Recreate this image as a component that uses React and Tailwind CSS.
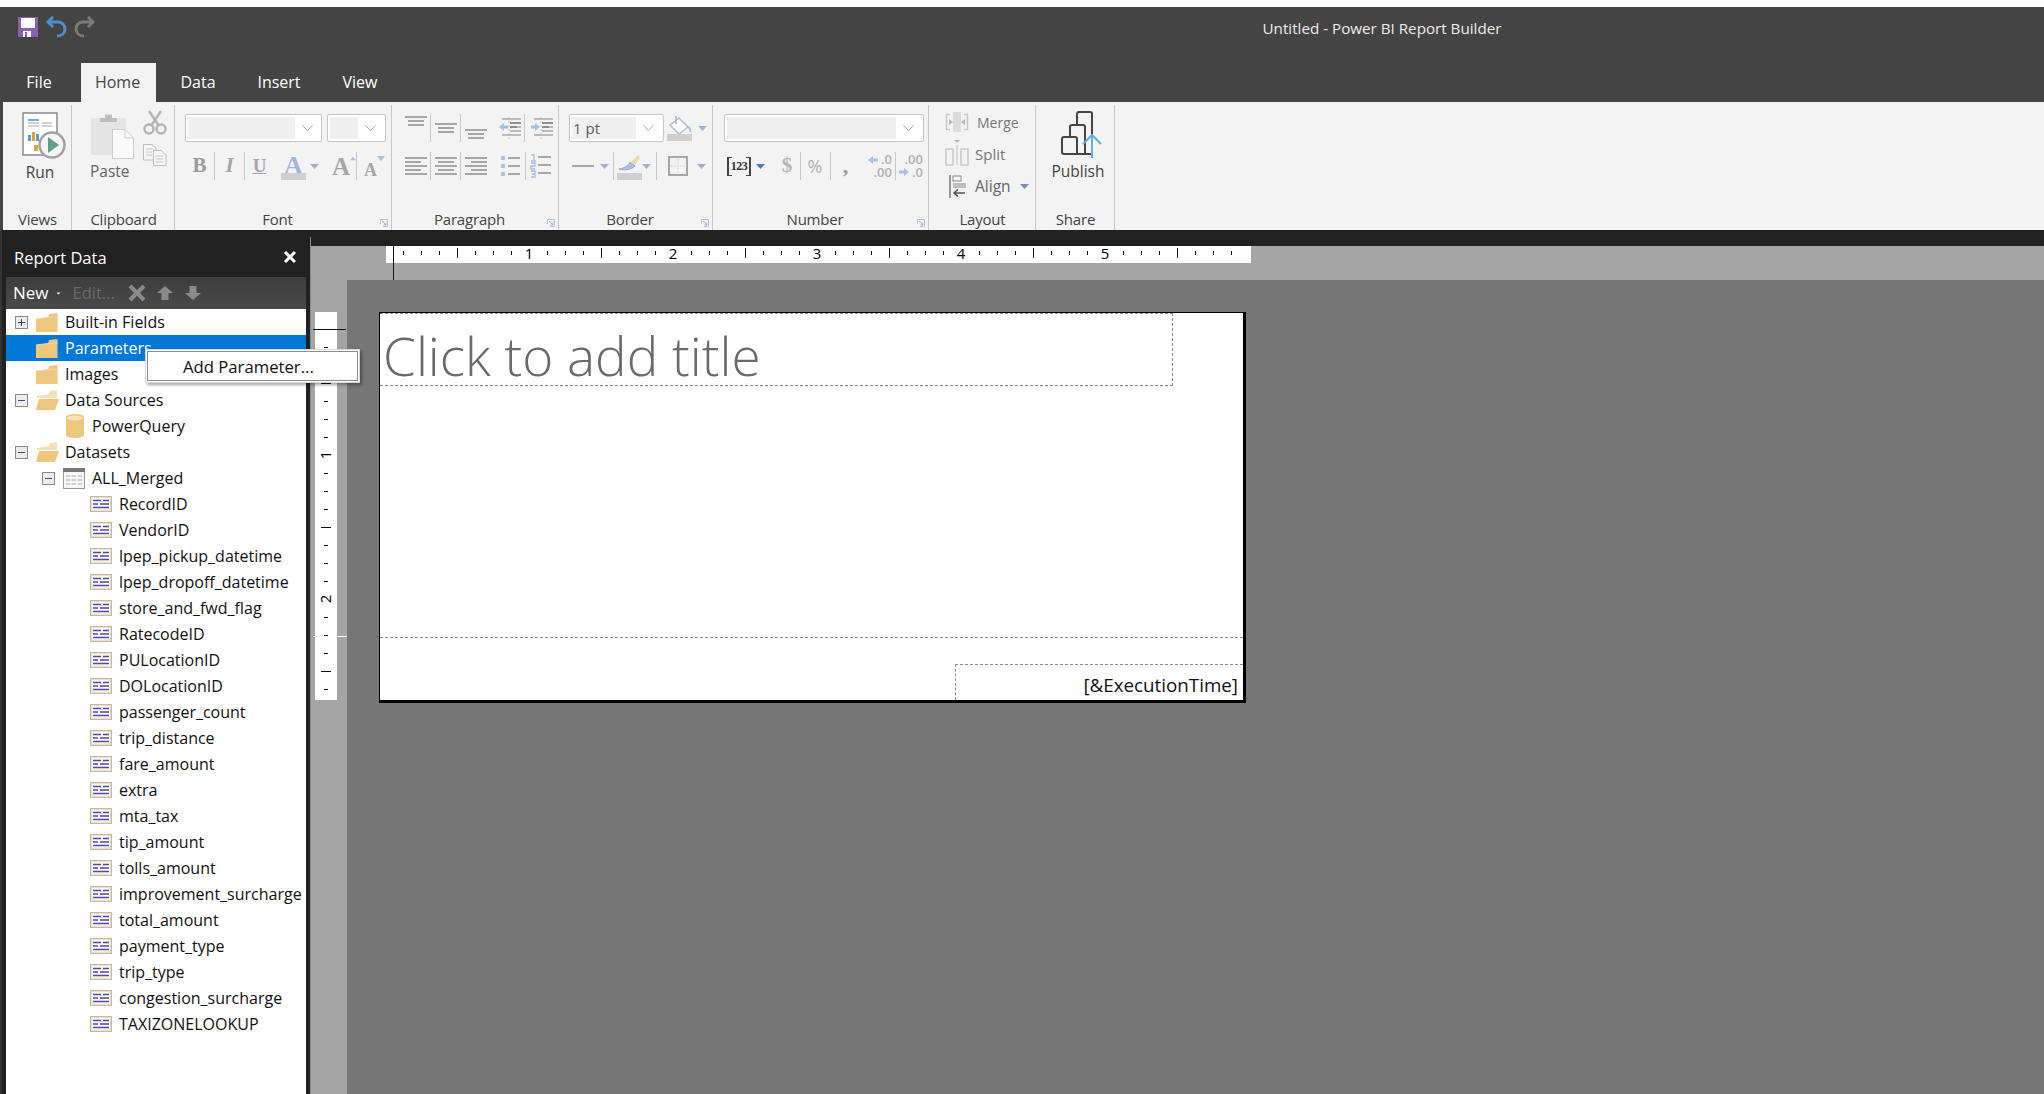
import React from "react";

const Sep = ({ c = "" }) => <div className={`w-px h-[28px] bg-[#c8c8c8] shrink-0 ${c}`} />;
const Caret = ({ c = "", color = "#9fb3d6" }) => (
  <svg width="9" height="5" viewBox="0 0 9 5" className={`block shrink-0 ${c}`}><path d="M0 0h9L4.5 5z" fill={color} /></svg>
);
const Chevron = () => (
  <svg width="11" height="6" viewBox="0 0 11 6" className="block shrink-0"><path d="M.5.5 5.5 5.5 10.5.5" fill="none" stroke="#a8a8a8" /></svg>
);
const Combo = ({ w, fill, value }) => (
  <div className={`${w} h-[28px] border border-[#c6c6c6] rounded-[2px] bg-white p-[2px] flex items-center shrink-0`}>
    <div className={`${fill} h-full bg-[#f0f0f0] text-[15px] leading-[23px] text-[#5e5e5e] pl-[1px]`}>{value}</div>
    <div className="flex-1 flex justify-center"><Chevron /></div>
  </div>
);
const Launcher = () => (
  <svg width="8" height="8" viewBox="0 0 8 8" className="absolute right-[3px] bottom-[3px]">
    <path d="M.5 5V.5H7.5V7.5H3" fill="none" stroke="#b7c3d6" /><path d="M2 2 6 6M6 3.5V6H3.5" fill="none" stroke="#9fb3d6" />
  </svg>
);
const Group = ({ w, label, launcher, children }) => (
  <div className={`relative ${w} h-full flex flex-col border-r border-[#c8c8c8] shrink-0`}>
    <div className="flex-1 min-h-0 relative">{children}</div>
    <div className={`h-[21px] leading-[21px] text-center text-[15px] text-[#444] tracking-[-0.2px] ${launcher ? "pr-[11px]" : "pl-[1px]"}`}>{label}</div>
    {launcher && <Launcher />}
  </div>
);
const Lines = ({ rows, w = 22, h = 24 }) => (
  <svg width={w} height={h} viewBox={`0 0 ${w} ${h}`} className="block shrink-0">
    {rows.map(([x1, x2, y], i) => <path key={i} d={`M${x1} ${y}H${x2}`} stroke="#a6a6a6" strokeWidth="2" />)}
  </svg>
);

const RunIcon = () => (
  <svg width="46" height="50" viewBox="0 0 46 50" className="block">
    <rect x="1" y="1" width="34" height="42" fill="#fff" stroke="#8a8a8a" strokeWidth="1.5" />
    <path d="M6 8H17" stroke="#4a8fd0" strokeWidth="1.5" /><path d="M6 11H17M6 14H17M20 11H30M20 14H30" stroke="#a9a9a9" strokeWidth="1.2" />
    <rect x="6" y="23" width="3" height="6" fill="#5a9ad6" /><rect x="10" y="20" width="3" height="9" fill="#e0a030" /><rect x="14" y="22" width="3" height="7" fill="#5a9ad6" />
    <rect x="12" y="33" width="4" height="6" fill="#d9a441" />
    <circle cx="30" cy="33" r="12.5" fill="#f6f6f6" stroke="#a3a3a3" strokeWidth="2.5" />
    <path d="M26 25 37 33 26 41z" fill="#5f9e8a" />
  </svg>
);
const PasteIcon = () => (
  <svg width="44" height="46" viewBox="0 0 44 46" className="block">
    <rect x="0" y="5" width="35" height="37" rx="2" fill="#e4e4e4" />
    <path d="M9 9V5H14V1.5H21V5H26V9z" fill="#bdbdbd" />
    <path d="M21.500 16.500H34L42.500 25V45.500H21.500z" fill="#fafafa" stroke="#cdcdcd" />
    <path d="M34 16.500V25H42.500" fill="none" stroke="#cdcdcd" />
  </svg>
);
const ScissorsIcon = () => (
  <svg width="24" height="25" viewBox="0 0 24 25" className="block">
    <path d="M6 1 16 16M18 1 8 16" stroke="#b5b5b5" strokeWidth="2.5" fill="none" />
    <circle cx="6" cy="19" r="4.500" fill="none" stroke="#b5b5b5" strokeWidth="2.5" /><circle cx="18" cy="19" r="4.500" fill="none" stroke="#b5b5b5" strokeWidth="2.500" />
  </svg>
);
const CopyIcon = () => (
  <svg width="24" height="22" viewBox="0 0 24 22" className="block">
    <path d="M.5.5H9L13 4V16H.500z" fill="#f6f6f6" stroke="#bdbdbd" /><path d="M10.500 6.500H18L23 11V21.500H10.500z" fill="#f6f6f6" stroke="#bdbdbd" />
    <path d="M3 5H9M3 8H9M3 11H9M13 12H20M13 15H20M13 18H20" stroke="#c6c6c6" />
  </svg>
);
const SmallA = ({ size, c = "", color = "#a6a6a6" }) => (
  <span className={`font-['Liberation_Serif',serif] font-bold leading-none ${c}`} style={{ fontSize: size, color }}>A</span>
);
const Up = ({ c = "" }) => <svg width="8" height="5" viewBox="0 0 8 5" className={`block ${c}`}><path d="M0 5 4 0 8 5z" fill="#aebfdc" /></svg>;
const Dn = ({ c = "" }) => <svg width="8" height="5" viewBox="0 0 8 5" className={`block ${c}`}><path d="M0 0H8L4 5z" fill="#aebfdc" /></svg>;

const Indent = ({ dir }) => (
  <svg width="24" height="24" viewBox="0 0 24 24" className="block shrink-0">
    <path d="M11 1V23" stroke="#c9c9c9" strokeWidth="1" strokeDasharray="2 2" />
    <path d="M4 3H23M12 7H23M12 11H23M12 15H23M4 19H23" stroke="#bbb" strokeWidth="2" />
    <path d="M12 7H23M12 11H19" stroke="#8f8f8f" strokeWidth="2" />
    {dir === "l" ? <path d="M1 11 6 7V9.500H10V12.500H6V15z" fill="#a9bfe4" /> : <path d="M10 11 5 7V9.500H1V12.500H5V15z" fill="#a9bfe4" />}
  </svg>
);
const Bullets = () => (
  <svg width="22" height="24" viewBox="0 0 22 24" className="block shrink-0">
    <circle cx="3" cy="4" r="2.200" fill="#aebfdc" /><circle cx="3" cy="12" r="2.200" fill="#aebfdc" /><circle cx="3" cy="20" r="2.200" fill="#aebfdc" />
    <path d="M8 4H20M8 12H20M8 20H20" stroke="#a6a6a6" strokeWidth="2" />
  </svg>
);
const Numbered = () => (
  <svg width="22" height="24" viewBox="0 0 22 24" className="block shrink-0">
    <path d="M8 3H21M8 11H21M8 19H21" stroke="#a6a6a6" strokeWidth="2" />
    <path d="M1 1H4V7M1 7H6M1 9H5V12H1V15H5M1 17H5V23H1M2 20H5" stroke="#a9bfe4" strokeWidth="1.300" fill="none" />
  </svg>
);
const Bucket = () => (
  <svg width="26" height="26" viewBox="0 0 26 26" className="block shrink-0">
    <path d="M3 10 12 3 21 12 12 19z" fill="#fdfdfd" stroke="#b4bfd2" strokeWidth="1.500" />
    <path d="M9 1V9" stroke="#aab4c6" strokeWidth="1.500" /><path d="M20 11C23 13 24 15 23 17" stroke="#aebfdc" strokeWidth="2" fill="none" />
    <rect x="0" y="19" width="25" height="7" fill="#cfcfcf" />
  </svg>
);
const Brush = () => (
  <svg width="26" height="27" viewBox="0 0 26 27" className="block shrink-0">
    <path d="M2 16C8 15 11 13 13 9L18 13C15 16 9 18 2 16z" fill="#a9bfe4" stroke="#8fa8d8" />
    <path d="M14 9 21 2 23 4 18 12z" fill="#e6d9a8" />
    <rect x="0" y="20" width="25" height="7" fill="#cfcfcf" />
  </svg>
);
const BorderIcon = () => (
  <svg width="20" height="20" viewBox="0 0 20 20" className="block shrink-0">
    <rect x="1" y="1" width="18" height="18" fill="none" stroke="#a6a6a6" strokeWidth="2" />
    <path d="M10 3V17M3 10H17" stroke="#cfcfcf" strokeDasharray="1.500 1.500" />
  </svg>
);
const MergeIcon = () => (
  <svg width="24" height="20" viewBox="0 0 24 20" className="block">
    <path d="M5 2.500H1.500V17.500H5M19 2.500H22.500V17.500H19" fill="none" stroke="#c8c8c8" strokeWidth="1.500" />
    <rect x="8" y="0" width="8" height="20" fill="#dcdcdc" />
    <path d="M4 7 8 10 4 13zM20 7 16 10 20 13z" fill="#b5b5b5" />
  </svg>
);
const SplitIcon = () => (
  <svg width="24" height="26" viewBox="0 0 24 26" className="block">
    <path d="M9 0H15L12 3z" fill="#b5b5b5" />
    <rect x="1" y="9" width="7" height="16" fill="none" stroke="#c8c8c8" strokeWidth="1.500" />
    <rect x="16" y="9" width="7" height="16" fill="none" stroke="#c8c8c8" strokeWidth="1.500" />
    <path d="M12 5V25" stroke="#d8d8d8" strokeWidth="2" />
  </svg>
);
const AlignIcon = () => (
  <svg width="18" height="23" viewBox="0 0 18 23" className="block">
    <path d="M1 0V23" stroke="#777" strokeWidth="1.500" />
    <rect x="4" y="1" width="8" height="5" fill="#f5f5f5" stroke="#8a8a8a" /><rect x="4" y="8" width="13" height="5" fill="#bdbdbd" />
    <path d="M16 18H5M9 14.500 5 18 9 21.500" fill="none" stroke="#555" strokeWidth="1.500" />
  </svg>
);
const PublishIcon = () => (
  <svg width="44" height="48" viewBox="0 0 44 48" className="block">
    <path d="M10 26V16C10 15 11 14 12 14H23C24 14 25 15 25 16V43M17 14V3C17 2 18 1 19 1H30C31 1 32 2 32 3V30" fill="none" stroke="#444" strokeWidth="2" />
    <path d="M4 26H15C16 26 17 27 17 28V43H4C3 43 2 42 2 41V28C2 27 3 26 4 26zM17 43H32" fill="none" stroke="#444" strokeWidth="2" />
    <path d="M32 47V24M23 33 32 24 41 33" fill="none" stroke="#5cb0e4" strokeWidth="2" />
  </svg>
);
const DecBtn = ({ dir, text }) => (
  <div className="relative w-[24px] h-[26px] shrink-0 text-[13px] leading-[13px] text-[#b0b0b0] font-semibold text-right whitespace-pre-line">
    {text}
    <svg width="10" height="10" viewBox="0 0 10 10" className={`absolute left-0 ${dir === "l" ? "top-[2px]" : "top-[14px]"}`}>
      {dir === "l" ? <path d="M0 5 5 1V3.500H10V6.500H5V9z" fill="#a9bfe4" /> : <path d="M10 5 5 1V3.500H0V6.500H5V9z" fill="#a9bfe4" />}
    </svg>
  </div>
);

const Ribbon = () => (
  <div className="h-[128px] ml-[3px] bg-[#f3f3f3] pt-[3px] flex">
    <Group w="w-[69px]" label="Views">
      <div className="ml-[19px] mt-[7px]"><RunIcon /></div>
      <div className="w-[76px] text-center text-[15.5px] leading-[20px] text-[#444] mt-[0px] -ml-[1px]">Run</div>
    </Group>
    <Group w="w-[103px]" label="Clipboard">
      <div className="flex">
        <div className="ml-[19px] mt-[8px]">
          <PasteIcon />
          <div className="w-[38px] text-center text-[15.5px] leading-[20px] text-[#666] mt-[2px] -ml-[1px]">Paste</div>
        </div>
        <div className="ml-[8px] mt-[5px]">
          <ScissorsIcon />
          <div className="mt-[9px]"><CopyIcon /></div>
        </div>
      </div>
    </Group>
    <Group w="w-[217px]" label="Font" launcher>
      <div className="flex ml-[10px] mt-[9px] gap-[5px]">
        <Combo w="w-[137px]" fill="w-[107px]" />
        <Combo w="w-[59px]" fill="w-[28px]" />
      </div>
      <div className="flex items-center ml-[10px] mt-[10px] h-[28px]">
        <div className="w-[29px] text-center font-['Liberation_Serif',serif] font-bold text-[21px] text-[#9b9b9b]">B</div>
        <Sep />
        <div className="w-[29px] text-center font-['Liberation_Serif',serif] italic font-bold text-[21px] text-[#a6a6a6]">I</div>
        <Sep />
        <div className="w-[29px] text-center font-['Liberation_Serif',serif] font-bold underline text-[19px] text-[#a6a6a6]">U</div>
        <div className="ml-[7px] w-[25px] flex flex-col items-center">
          <SmallA size={26} color="#a3b5d8" c="h-[20px]" />
          <div className="h-[7px] w-[25px] bg-[#cfcfcf]" />
        </div>
        <Caret c="ml-[4px]" />
        <div className="ml-[13px] flex items-start w-[24px]"><SmallA size={25} /><Up c="mt-[2px]" /></div>
        <Sep />
        <div className="ml-[7px] flex items-start"><SmallA size={18} c="mt-[7px]" /><Dn c="mt-[2px]" /></div>
      </div>
    </Group>
    <Group w="w-[167px]" label="Paragraph" launcher>
      <div className="flex items-center ml-[13px] mt-[9px] h-[28px]">
        <Lines rows={[[0, 22, 1], [3, 19, 5], [3, 19, 9]]} /><Sep c="ml-[3px]" />
        <div className="ml-[4px]"><Lines rows={[[0, 22, 8], [3, 19, 12], [3, 19, 16]]} /></div><Sep c="ml-[3px]" />
        <div className="ml-[4px]"><Lines rows={[[0, 22, 14], [3, 19, 18], [3, 19, 22]]} /></div>
        <div className="ml-[11px]"><Indent dir="l" /></div><Sep c="ml-[2px]" />
        <div className="ml-[5px]"><Indent dir="r" /></div>
      </div>
      <div className="flex items-center ml-[13px] mt-[10px] h-[28px]">
        <Lines rows={[[0, 22, 4], [0, 16, 8], [0, 22, 12], [0, 16, 16], [0, 22, 20]]} /><Sep c="ml-[3px]" />
        <div className="ml-[4px]"><Lines rows={[[0, 22, 4], [3, 19, 8], [0, 22, 12], [3, 19, 16], [0, 22, 20]]} /></div><Sep c="ml-[3px]" />
        <div className="ml-[4px]"><Lines rows={[[0, 22, 4], [6, 22, 8], [0, 22, 12], [6, 22, 16], [0, 22, 20]]} /></div>
        <div className="ml-[13px]"><Bullets /></div><Sep c="ml-[3px]" />
        <div className="ml-[4px]"><Numbered /></div>
      </div>
    </Group>
    <Group w="w-[154px]" label="Border" launcher>
      <div className="flex items-center ml-[10px] mt-[9px] h-[28px]">
        <Combo w="w-[95px]" fill="w-[64px]" value="1 pt" />
        <div className="ml-[3px]"><Bucket /></div>
        <Caret c="ml-[5px]" />
      </div>
      <div className="flex items-center ml-[13px] mt-[10px] h-[28px]">
        <div className="w-[22px] h-[2px] bg-[#a6a6a6]" />
        <Caret c="ml-[6px]" /><Sep c="ml-[4px]" />
        <div className="ml-[3px]"><Brush /></div>
        <Caret c="ml-[-1px]" /><Sep c="ml-[5px]" />
        <div className="ml-[11px]"><BorderIcon /></div>
        <Caret c="ml-[9px]" />
      </div>
    </Group>
    <Group w="w-[216px]" label="Number" launcher>
      <div className="ml-[11px] mt-[9px]"><Combo w="w-[200px]" fill="w-[169px]" /></div>
      <div className="flex items-center ml-[14px] mt-[10px] h-[28px]">
        <div className="relative w-[24px] h-[19px] border-x-2 border-[#444] flex items-center justify-center font-['Liberation_Serif',serif] font-bold text-[12px] text-[#333] tracking-[-0.5px]">
          <span className="absolute left-0 top-0 w-[3px] h-full border-y border-[#444]" />
          <span className="absolute right-0 top-0 w-[3px] h-full border-y border-[#444]" />
          123
        </div>
        <Caret c="ml-[5px]" color="#4a78c0" />
        <div className="w-[20px] ml-[12px] text-center font-['Liberation_Serif',serif] font-bold text-[21px] text-[#b5b5b5]">$</div>
        <Sep c="ml-[3px]" />
        <div className="w-[28px] text-center text-[18px] text-[#b0b0b0]">%</div>
        <Sep c="ml-[1px]" />
        <div className="w-[29px] text-center font-['Liberation_Serif',serif] font-bold text-[22px] leading-[16px] text-[#9b9b9b]">,</div>
        <div className="ml-[8px]"><DecBtn dir="l" text={".0\n.00"} /></div>
        <Sep c="ml-[3px]" />
        <div className="ml-[3px]"><DecBtn dir="r" text={".00\n.0"} /></div>
      </div>
    </Group>
    <Group w="w-[107px]" label="Layout">
      <div className="flex items-center ml-[16px] mt-[7px] h-[20px]">
        <MergeIcon /><span className="ml-[8px] text-[14px] text-[#777]">Merge</span>
      </div>
      <div className="flex items-center ml-[16px] mt-[8px] h-[26px]">
        <SplitIcon /><span className="ml-[6px] text-[15px] text-[#777] mt-[2px]">Split</span>
      </div>
      <div className="flex items-center ml-[20px] mt-[9px] h-[23px]">
        <AlignIcon /><span className="ml-[8px] text-[15.5px] text-[#666]">Align</span>
        <Caret c="ml-[9px]" color="#6f8fc8" />
      </div>
    </Group>
    <Group w="w-[79px]" label="Share">
      <div className="ml-[24px] mt-[6px]"><PublishIcon /></div>
      <div className="text-center text-[15.5px] leading-[20px] text-[#444] mt-[2px] w-[84px]">Publish</div>
    </Group>
  </div>
);

const FolderClosed = () => (
  <svg width="22" height="19" viewBox="0 0 22 19" className="block shrink-0">
    <path d="M0 6 12 4.500 13 1 21.500 0V19H0z" fill="#eec77f" /><path d="M0 6 12 4.500 21.500 4" fill="none" stroke="#f3d69f" />
  </svg>
);
const FolderOpen = () => (
  <svg width="23" height="20" viewBox="0 0 23 20" className="block shrink-0">
    <path d="M1 6 13 4 14 1 21 0V8H1z" fill="#f6e0b4" /><path d="M3 9H23L19 20H0z" fill="#eec77f" />
  </svg>
);
const Cylinder = () => (
  <svg width="18" height="24" viewBox="0 0 18 24" className="block shrink-0">
    <path d="M0 3C0 -1 18 -1 18 3V21C18 25 0 25 0 21z" fill="#eec77f" /><ellipse cx="9" cy="4" rx="8" ry="2.500" fill="#f6e3bc" />
  </svg>
);
const TableIcon = () => (
  <svg width="22" height="21" viewBox="0 0 22 21" className="block shrink-0">
    <rect x=".5" y=".5" width="21" height="20" fill="#f7f7f7" stroke="#9a9a9a" /><rect x="0" y="0" width="22" height="4" fill="#777" />
    <path d="M3 8H19M3 12H19M3 16H19" stroke="#cfcfcf" strokeWidth="2" /><path d="M8 6V18M14 6V18" stroke="#fff" />
  </svg>
);
const FieldIcon = () => (
  <svg width="22" height="16" viewBox="0 0 22 16" className="block shrink-0">
    <rect x=".5" y=".5" width="21" height="15" fill="#e9e2cc" stroke="#c4b99c" /><rect x="2" y="2" width="18" height="11.500" fill="#fbfaf3" />
    <path d="M3 4.500H11M13 4.500H19M3 8H8M10 8H19M3 11.500H19" stroke="#4c4cac" strokeWidth="1.700" />
  </svg>
);
const Box = ({ plus }) => (
  <svg width="13" height="13" viewBox="0 0 13 13" className="block shrink-0">
    <rect x=".5" y=".5" width="12" height="12" fill="#ececec" stroke="#8a8a8a" />
    <path d={plus ? "M3 6.500H10M6.500 3V10" : "M3 6.500H10"} stroke="#3a4a8a" />
  </svg>
);

const fields = ["RecordID", "VendorID", "lpep_pickup_datetime", "lpep_dropoff_datetime", "store_and_fwd_flag", "RatecodeID", "PULocationID", "DOLocationID", "passenger_count", "trip_distance", "fare_amount", "extra", "mta_tax", "tip_amount", "tolls_amount", "improvement_surcharge", "total_amount", "payment_type", "trip_type", "congestion_surcharge", "TAXIZONELOOKUP"];

const Row = ({ sel, pl, gap, box, icon, text }) => (
  <div className={`h-[26px] flex items-center whitespace-nowrap text-[16px] ${sel ? "bg-[#0078d7] text-white" : "text-[#111]"} ${pl}`}>
    {box}
    {icon}
    <span className={`${gap} pb-[1px]`}>{text}</span>
  </div>
);

const Panel = () => (
  <div className="w-[310px] shrink-0 bg-[#212121] border-l-2 border-[#333] pl-[4px] pr-[4px] flex flex-col">
    <div className="h-[47px] flex items-center justify-between pl-[8px] pr-[9px] pt-[9px] text-white text-[16.5px]">
      <span>Report Data</span>
      <svg width="14" height="14" viewBox="0 0 14 14" className="block mb-[3px]"><path d="M2 2 12 12M12 2 2 12" stroke="#fff" strokeWidth="3" /></svg>
    </div>
    <div className="h-[32px] bg-gradient-to-b from-[#3d3d3d] to-[#4a4a4a] flex items-center pl-[7px]">
      <span className="text-white text-[17px]">New</span>
      <Caret c="ml-[5px] scale-50" color="#ddd" />
      <span className="ml-[10px] text-[#6a6a6a] text-[16.5px]">Edit...</span>
      <svg width="18" height="18" viewBox="0 0 18 18" className="block ml-[13px]"><path d="M2 2 16 16M16 2 2 16" stroke="#8a8a8a" strokeWidth="4" /></svg>
      <svg width="16" height="14" viewBox="0 0 16 14" className="block ml-[11px]"><path d="M8 0 16 7H11.500V14H4.500V7H0z" fill="#8a8a8a" /></svg>
      <svg width="16" height="14" viewBox="0 0 16 14" className="block ml-[12px]"><path d="M8 14 16 7H11.500V0H4.500V7H0z" fill="#8a8a8a" /></svg>
    </div>
    <div className="relative flex-1 bg-white">
      <Row pl="pl-[9px]" box={<Box plus />} icon={<div className="ml-[8px]"><FolderClosed /></div>} gap="ml-[7px]" text="Built-in Fields" />
      <Row sel pl="pl-[30px]" icon={<FolderClosed />} gap="ml-[7px]" text="Parameters" />
      <Row pl="pl-[30px]" icon={<FolderClosed />} gap="ml-[7px]" text="Images" />
      <Row pl="pl-[9px]" box={<Box />} icon={<div className="ml-[8px]"><FolderOpen /></div>} gap="ml-[6px]" text="Data Sources" />
      <Row pl="pl-[60px]" icon={<Cylinder />} gap="ml-[8px]" text="PowerQuery" />
      <Row pl="pl-[9px]" box={<Box />} icon={<div className="ml-[8px]"><FolderOpen /></div>} gap="ml-[6px]" text="Datasets" />
      <Row pl="pl-[36px]" box={<Box />} icon={<div className="ml-[8px]"><TableIcon /></div>} gap="ml-[7px]" text="ALL_Merged" />
      {fields.map((f) => <Row key={f} pl="pl-[84px]" icon={<FieldIcon />} gap="ml-[7px]" text={f} />)}
      <div className="absolute z-10 left-[139px] top-[40px] w-[215px] h-[34px] bg-white border border-[#d8d8d8] p-px shadow-[2px_2px_3px_rgba(0,0,0,0.35)]">
        <div className="h-full border border-[#8c8c8c] pl-[35px] text-[16.7px] leading-[29px] text-[#111] whitespace-nowrap">Add Parameter...</div>
      </div>
    </div>
  </div>
);

const tickX = Array.from({ length: 48 }, (_, i) => -1 + 18 * (i + 1));
const HRuler = () => (
  <svg width="865" height="17" viewBox="0 0 865 17" className="block overflow-visible bg-white">
    {tickX.filter((x) => x < 865).map((x, i) => {
      const n = i + 1;
      if (n % 8 === 0) return null;
      return n % 4 === 0
        ? <path key={x} d={`M${x + .5} 2V12`} stroke="#111" />
        : <path key={x} d={`M${x + .5} 5V9`} stroke="#111" />;
    })}
    {[1, 2, 3, 4, 5].map((n) => <text key={n} x={-1 + 144 * n} y="13" textAnchor="middle" fontSize="15" fill="#000" fontFamily="Open Sans">{n}</text>)}
    <path d="M7.500 0V34" stroke="#111" />
  </svg>
);
const VRuler = () => {
  const ys = Array.from({ length: 21 }, (_, i) => 17 + 18 * i);
  return (
    <svg width="22" height="388" viewBox="0 0 22 388" className="block overflow-visible bg-white">
      {ys.map((y, i) => {
        if (i === 0) return <path key={y} d={`M-2 ${y + .5}H31`} stroke="#111" />;
        if (i % 8 === 7) return null;
        return i % 8 === 3
          ? <path key={y} d={`M6 ${y + .5}H16`} stroke="#111" />
          : <path key={y} d={`M9 ${y + .5}H13`} stroke="#111" />;
      })}
      {[1, 2].map((n) => <text key={n} transform={`translate(16 ${144 * n - 1}) rotate(-90)`} textAnchor="middle" fontSize="15" fill="#000" fontFamily="Open Sans">{n}</text>)}
      <path d="M-2 324.500H32" stroke="#fff" />
    </svg>
  );
};

const Canvas = () => (
  <div className="flex-1 min-w-0 flex flex-col">
    <div className="h-[16px] bg-[#212121] pt-[7px]"><div className="w-px h-[9px] bg-[#8a8a8a]" /></div>
    <div className="flex-1 flex flex-col bg-[#a5a5a5] border-l border-[#8a8a8a]">
      <div className="h-[34px] pl-[75px]"><HRuler /></div>
      <div className="flex-1 flex min-h-0">
        <div className="w-[36px] shrink-0 pl-[4px] pt-[32px]"><VRuler /></div>
        <div className="flex-1 bg-[#767676] pl-[32px] pt-[32px]">
          <div className="w-[867px] h-[391px] bg-white border-t border-l border-black border-r-[3px] border-b-[3px] flex flex-col">
            <div className="w-[793px] h-[73px] shrink-0 border-b border-r border-t border-dashed border-[#8c8c8c] pl-[3px] pt-[10px] font-light text-[53px] leading-[64px] text-[#6a6a6a] whitespace-nowrap">Click to add title</div>
            <div className="flex-1" />
            <div className="h-[63px] border-t border-dashed border-[#8c8c8c] flex justify-end pt-[26px]">
              <div className="w-[288px] h-[36px] border-l border-t border-dashed border-[#8c8c8c] text-right pr-[5px] text-[18.8px] leading-[40px] text-[#111]">[&amp;ExecutionTime]</div>
            </div>
          </div>
        </div>
      </div>
    </div>
  </div>
);

export default function App() {
  return (
    <div className="w-[2044px] h-[1094px] overflow-hidden bg-white flex flex-col font-['Open_Sans',sans-serif]">
      <div className="h-[7px] shrink-0 bg-white" />
      <div className="h-[95px] shrink-0 bg-[#444444] flex flex-col">
        <div className="h-[56px] relative flex pl-[18px] pt-[10px] gap-[7px]">
          <svg width="20" height="20" viewBox="0 0 20 20" className="block">
            <rect width="20" height="20" fill="#8d5fb0" /><rect x="3" y="1" width="14" height="10" fill="#fff" /><rect x="5" y="14" width="8" height="6" fill="#fff" /><rect x="7" y="15" width="2" height="5" fill="#8d5fb0" />
          </svg>
          <svg width="22" height="22" viewBox="0 0 22 22" className="block -mt-[1px]"><path d="M3 6H13C17 6 20 9 20 13C20 17 17 20 12 20M8 1 3 6 8 11" fill="none" stroke="#4f8fc9" strokeWidth="3" /></svg>
          <svg width="22" height="22" viewBox="0 0 22 22" className="block -mt-[1px]"><path d="M19 6H9C5 6 2 9 2 13C2 17 5 20 10 20M14 1 19 6 14 11" fill="none" stroke="#7a7a7a" strokeWidth="3" /></svg>
          <div className="absolute left-[1262px] w-[240px] top-[11px] text-center text-[15.2px] leading-[20px] text-[#ececec] whitespace-nowrap">Untitled - Power BI Report Builder</div>
        </div>
        <div className="h-[39px] flex items-stretch text-[16px] text-white pb-0">
          <div className="w-[81px] flex items-center justify-center pr-[3px] pb-[2px]">File</div>
          <div className="w-[75px] bg-[#f3f3f3] text-[#444] flex items-center justify-center pb-[2px] pr-[2px]">Home</div>
          <div className="w-[84px] flex items-center justify-center pb-[2px]">Data</div>
          <div className="w-[78px] flex items-center justify-center pb-[2px]">Insert</div>
          <div className="w-[84px] flex items-center justify-center pb-[2px]">View</div>
        </div>
      </div>
      <div className="shrink-0 bg-[#444444]"><Ribbon /></div>
      <div className="flex-1 flex min-h-0 bg-[#212121]">
        <Panel />
        <Canvas />
      </div>
    </div>
  );
}
